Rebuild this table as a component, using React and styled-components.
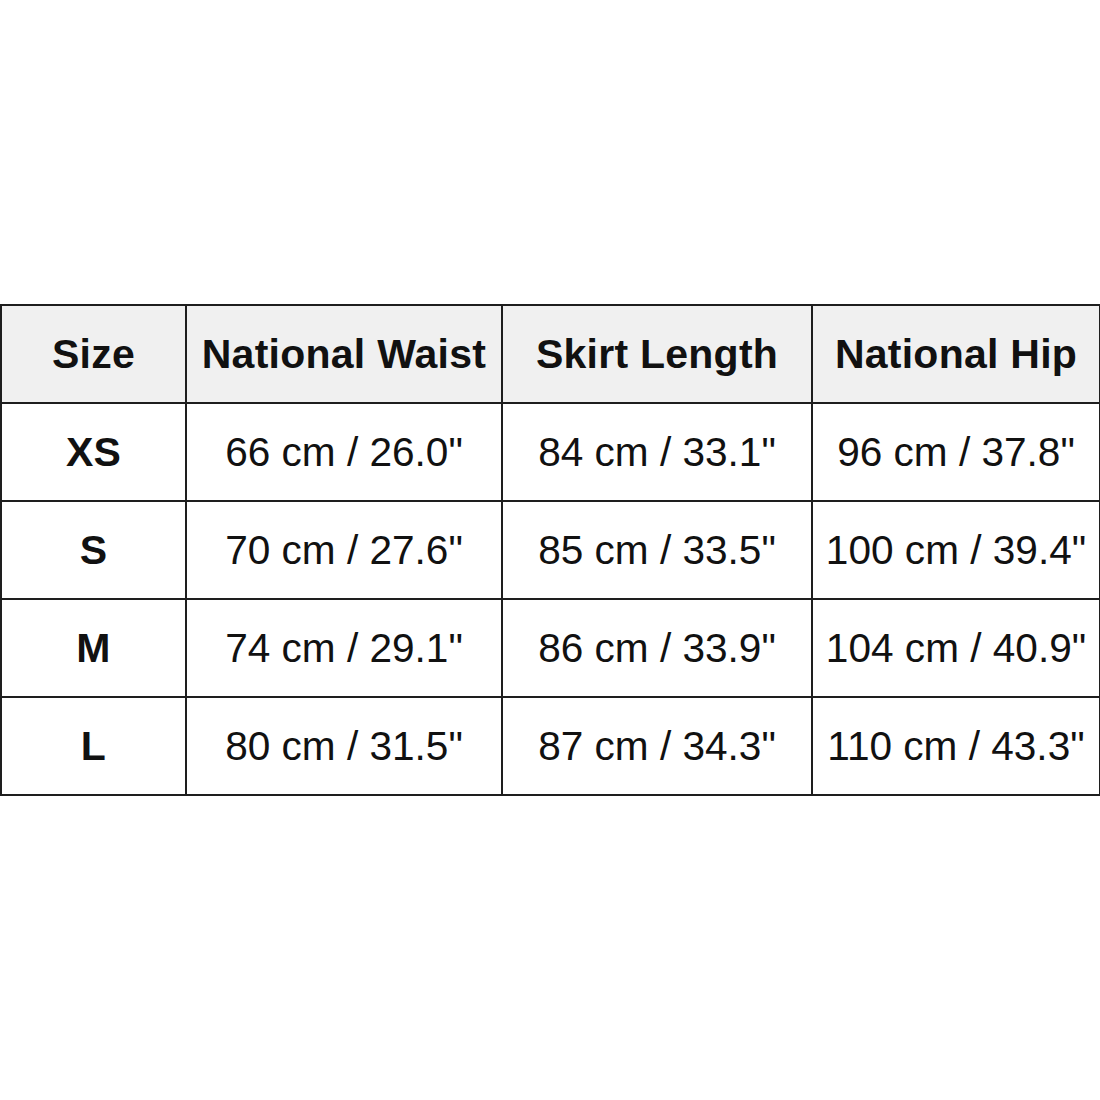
import React from "react";
import styled, { createGlobalStyle } from "styled-components";

const Global = createGlobalStyle`
  html, body { margin: 0; padding: 0; background: #ffffff; }
  body { font-family: "Liberation Sans", Arial, sans-serif; }
`;

const Page = styled.div`
  width: 1100px;
  height: 1100px;
  display: flex;
  align-items: center;
  justify-content: flex-start;
  background: #ffffff;
`;

const Table = styled.table`
  border-collapse: collapse;
  table-layout: fixed;
  width: 1099px;
  color: #111111;
  font-family: "Liberation Sans", Arial, sans-serif;
`;

const Col = styled.col`
  width: ${(p) => p.$w}px;
`;

const Row = styled.tr`
  height: 98px;
`;

const Cell = styled.td`
  border: 2px solid #1e1e1e;
  text-align: center;
  vertical-align: middle;
  padding: 0;
  white-space: nowrap;
  font-size: ${(p) => (p.$bold ? "41px" : "40.6px")};
  letter-spacing: ${(p) => (p.$bold ? "0.25px" : "0")};
  font-weight: ${(p) => (p.$bold ? 700 : 400)};
  background: ${(p) => (p.$head ? "#f0f0f0" : "#ffffff")};
`;

const widths = [185, 316, 310, 288];
const headers = ["Size", "National Waist", "Skirt Length", "National Hip"];
const rows = [
  ["XS", '66 cm / 26.0"', '84 cm / 33.1"', '96 cm / 37.8"'],
  ["S", '70 cm / 27.6"', '85 cm / 33.5"', '100 cm / 39.4"'],
  ["M", '74 cm / 29.1"', '86 cm / 33.9"', '104 cm / 40.9"'],
  ["L", '80 cm / 31.5"', '87 cm / 34.3"', '110 cm / 43.3"'],
];

export default function App() {
  return (
    <>
      <Global />
      <Page>
        <Table>
          <colgroup>
            {widths.map((w, i) => (
              <Col key={i} $w={w} />
            ))}
          </colgroup>
          <thead>
            <Row>
              {headers.map((h) => (
                <Cell as="th" key={h} $head $bold>
                  {h}
                </Cell>
              ))}
            </Row>
          </thead>
          <tbody>
            {rows.map((r) => (
              <Row key={r[0]}>
                {r.map((c, i) => (
                  <Cell key={i} $bold={i === 0}>
                    {c}
                  </Cell>
                ))}
              </Row>
            ))}
          </tbody>
        </Table>
      </Page>
    </>
  );
}
